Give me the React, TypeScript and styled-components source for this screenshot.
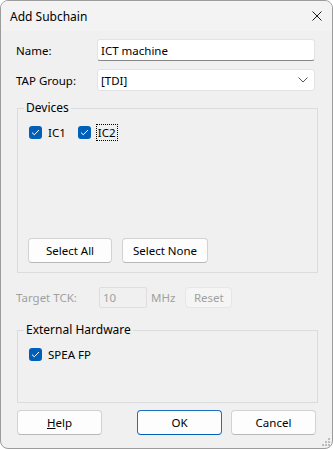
import styled, { createGlobalStyle } from "styled-components";

const GlobalStyle = createGlobalStyle`
  html, body {
    margin: 0;
    padding: 0;
    background: #ffffff;
  }
  body {
    font-family: "Segoe UI", "Noto Sans", sans-serif;
    font-size: 11.5px;
    color: #000;
  }
`;

const Window = styled.div`
  width: 333px;
  height: 449px;
  box-sizing: border-box;
  border: 1px solid #9c9c9c;
  border-radius: 8px;
  overflow: hidden;
  background: #f0f0f0;
  display: flex;
  flex-direction: column;
`;

const TitleBar = styled.div`
  height: 30px;
  flex: 0 0 30px;
  display: flex;
  align-items: center;
  justify-content: space-between;
  padding: 0 10px 0 9px;
  background: #f3f3f3;
  font-size: 12px;
`;

const CloseIcon = styled.svg`
  width: 10px;
  height: 10px;
`;

const Body = styled.div`
  flex: 1;
  display: flex;
  flex-direction: column;
  padding: 8px 14px 0 15px;
`;

const FormRow = styled.div<{ $gap?: number }>`
  display: flex;
  align-items: center;
  margin-top: ${(p) => p.$gap ?? 0}px;
`;

const Label = styled.span<{ $disabled?: boolean }>`
  width: 81px;
  flex: 0 0 81px;
  color: ${(p) => (p.$disabled ? "#a0a0a0" : "#000")};
`;

const TextInput = styled.div`
  flex: 1;
  height: 22px;
  margin-right: 3px;
  box-sizing: border-box;
  display: flex;
  align-items: center;
  padding: 0 6px 0 3px;
  background: #fff;
  border: 1px solid #e3e3e3;
  border-bottom: 1px solid #868686;
  border-radius: 3px;
`;

const Select = styled(TextInput)`
  justify-content: space-between;
  border-bottom: 1px solid #e3e3e3;
  padding-right: 6px;
`;

const Chevron = styled.svg`
  width: 10px;
  height: 6px;
`;

const Group = styled.fieldset<{ $top: number }>`
  margin: ${(p) => p.$top}px 0 0 1px;
  padding: 0;
  border: 1px solid #dcdcdc;
  border-radius: 0;
  min-width: 0;
`;

const Legend = styled.legend`
  margin-left: 6px;
  padding: 0 2px;
  height: 16px;
  line-height: 16px;
  font-size: 12px;
`;

const GroupContent = styled.div<{ $height: number }>`
  height: ${(p) => p.$height}px;
  padding: 9px 10px 0 10px;
  display: flex;
  flex-direction: column;
`;

const CheckRow = styled.div`
  display: flex;
  align-items: center;
  gap: 11px;
  height: 15px;
`;

const CheckItem = styled.label`
  display: flex;
  align-items: center;
  gap: 6px;
  margin-left: 1px;
`;

const CheckBox = styled.span`
  width: 13px;
  height: 13px;
  border-radius: 3px;
  background: #005fb8;
  display: flex;
  align-items: center;
  justify-content: center;
`;

const CheckText = styled.span<{ $focused?: boolean }>`
  padding: 0 1px;
  line-height: 15px;
  outline: ${(p) => (p.$focused ? "1px dotted #000" : "none")};
`;

const ButtonRow = styled.div<{ $gap: number }>`
  display: flex;
  gap: ${(p) => p.$gap}px;
  margin-top: auto;
  margin-bottom: 9px;
`;

const Button = styled.button<{ $width: number; $primary?: boolean; $left?: number }>`
  width: ${(p) => p.$width}px;
  height: 25px;
  margin-left: ${(p) => p.$left ?? 0}px;
  box-sizing: border-box;
  font-family: inherit;
  font-size: 11.5px;
  color: #000;
  background: #fdfdfd;
  border: 1px solid ${(p) => (p.$primary ? "#1a6fc0" : "#d2d2d2")};
  border-bottom-color: ${(p) => (p.$primary ? "#005fb8" : "#b8b8b8")};
  border-radius: 4px;
  padding: 0;
`;

const SmallInput = styled.div`
  width: 48px;
  height: 21px;
  box-sizing: border-box;
  border: 1px solid #dedede;
  border-radius: 2px;
  padding-left: 3px;
  display: flex;
  align-items: center;
  color: #a0a0a0;
  margin-left: 2px;
`;

const Unit = styled.span`
  color: #a0a0a0;
  margin-left: 4px;
`;

const ResetButton = styled.button`
  width: 47px;
  height: 21px;
  margin-left: 10px;
  font-family: inherit;
  font-size: 11.5px;
  color: #a0a0a0;
  background: #f5f5f5;
  border: 1px solid #e6e6e6;
  border-radius: 4px;
  padding: 0;
`;

const Footer = styled.div`
  display: flex;
  align-items: center;
  margin: 7px 2px 0 1px;
`;

const Spacer = styled.div`
  flex: 1;
`;

const Grip = styled.svg`
  position: absolute;
  right: 3px;
  bottom: 3px;
`;

const Frame = styled.div`
  position: relative;
  width: 333px;
  height: 449px;
`;

const Check = () => (
  <CheckBox>
    <svg width="9" height="7" viewBox="0 0 9 7">
      <path d="M1 3.6 L3.3 5.8 L8 1" stroke="#fff" strokeWidth="1" fill="none" />
    </svg>
  </CheckBox>
);

export default function App() {
  return (
    <>
      <GlobalStyle />
      <Frame>
        <Window>
          <TitleBar>
            <span>Add Subchain</span>
            <CloseIcon viewBox="0 0 10 10">
              <path d="M0.5 0.5 L9.5 9.5 M9.5 0.5 L0.5 9.5" stroke="#1a1a1a" strokeWidth="1" />
            </CloseIcon>
          </TitleBar>
          <Body>
            <FormRow>
              <Label>Name:</Label>
              <TextInput>ICT machine</TextInput>
            </FormRow>
            <FormRow $gap={8}>
              <Label>TAP Group:</Label>
              <Select>
                <span>[TDI]</span>
                <Chevron viewBox="0 0 10 6">
                  <path d="M0.5 0.5 L5 5 L9.5 0.5" stroke="#555" strokeWidth="1" fill="none" />
                </Chevron>
              </Select>
            </FormRow>
            <Group $top={9}>
              <Legend>Devices</Legend>
              <GroupContent $height={147}>
                <CheckRow>
                  <CheckItem>
                    <Check />
                    <span>IC1</span>
                  </CheckItem>
                  <CheckItem>
                    <Check />
                    <CheckText $focused>IC2</CheckText>
                  </CheckItem>
                </CheckRow>
                <ButtonRow $gap={10}>
                  <Button $width={84}>Select All</Button>
                  <Button $width={86}>Select None</Button>
                </ButtonRow>
              </GroupContent>
            </Group>
            <FormRow $gap={14}>
              <Label $disabled>Target TCK:</Label>
              <SmallInput>10</SmallInput>
              <Unit>MHz</Unit>
              <ResetButton disabled>Reset</ResetButton>
            </FormRow>
            <Group $top={14}>
              <Legend>External Hardware</Legend>
              <GroupContent $height={55}>
                <CheckRow>
                  <CheckItem>
                    <Check />
                    <span>SPEA FP</span>
                  </CheckItem>
                </CheckRow>
              </GroupContent>
            </Group>
            <Footer>
              <Button $width={85}>
                <u>H</u>elp
              </Button>
              <Spacer />
              <Button $width={85} $primary>
                OK
              </Button>
              <Button $width={85} $left={9}>
                Cancel
              </Button>
            </Footer>
          </Body>
        </Window>
        <Grip width="9" height="9" viewBox="0 0 9 9">
          <g fill="#bdbdbd">
            <rect x="7" y="1" width="2" height="2" />
            <rect x="4" y="4" width="2" height="2" />
            <rect x="7" y="4" width="2" height="2" />
            <rect x="1" y="7" width="2" height="2" />
            <rect x="4" y="7" width="2" height="2" />
            <rect x="7" y="7" width="2" height="2" />
          </g>
        </Grip>
      </Frame>
    </>
  );
}
